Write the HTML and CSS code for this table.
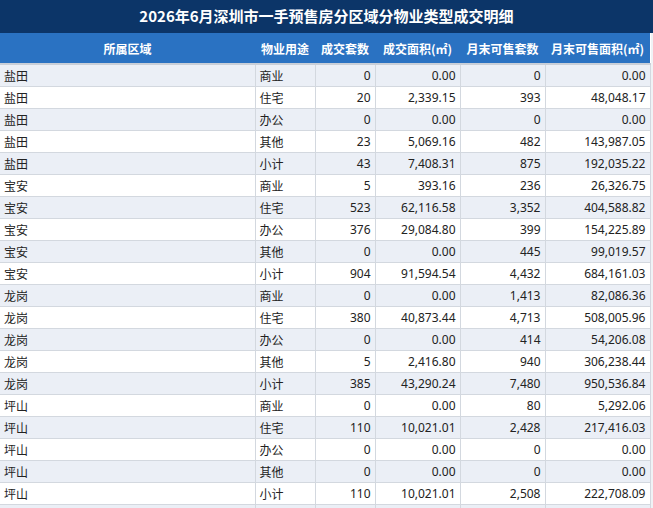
FILE: index.html
```html
<!DOCTYPE html>
<html lang="zh-CN">
<head>
<meta charset="utf-8">
<title>2026年6月深圳市一手预售房分区域分物业类型成交明细</title>
<link rel="stylesheet" href="styles.css">
</head>
<body>
<div class="title">2026年6月深圳市一手预售房分区域分物业类型成交明细</div>
<table class="grid">
<colgroup>
<col class="c-area"><col class="c-use"><col class="c-n"><col class="c-a"><col class="c-n2"><col class="c-a2">
</colgroup>
<thead>
<tr><th>所属区域</th><th>物业用途</th><th>成交套数</th><th>成交面积(㎡)</th><th>月末可售套数</th><th>月末可售面积(㎡)</th></tr>
</thead>
<tbody>
<tr><td>盐田</td><td>商业</td><td class="num">0</td><td class="num">0.00</td><td class="num">0</td><td class="num">0.00</td></tr>
<tr><td>盐田</td><td>住宅</td><td class="num">20</td><td class="num">2,339.15</td><td class="num">393</td><td class="num">48,048.17</td></tr>
<tr><td>盐田</td><td>办公</td><td class="num">0</td><td class="num">0.00</td><td class="num">0</td><td class="num">0.00</td></tr>
<tr><td>盐田</td><td>其他</td><td class="num">23</td><td class="num">5,069.16</td><td class="num">482</td><td class="num">143,987.05</td></tr>
<tr><td>盐田</td><td>小计</td><td class="num">43</td><td class="num">7,408.31</td><td class="num">875</td><td class="num">192,035.22</td></tr>
<tr><td>宝安</td><td>商业</td><td class="num">5</td><td class="num">393.16</td><td class="num">236</td><td class="num">26,326.75</td></tr>
<tr><td>宝安</td><td>住宅</td><td class="num">523</td><td class="num">62,116.58</td><td class="num">3,352</td><td class="num">404,588.82</td></tr>
<tr><td>宝安</td><td>办公</td><td class="num">376</td><td class="num">29,084.80</td><td class="num">399</td><td class="num">154,225.89</td></tr>
<tr><td>宝安</td><td>其他</td><td class="num">0</td><td class="num">0.00</td><td class="num">445</td><td class="num">99,019.57</td></tr>
<tr><td>宝安</td><td>小计</td><td class="num">904</td><td class="num">91,594.54</td><td class="num">4,432</td><td class="num">684,161.03</td></tr>
<tr><td>龙岗</td><td>商业</td><td class="num">0</td><td class="num">0.00</td><td class="num">1,413</td><td class="num">82,086.36</td></tr>
<tr><td>龙岗</td><td>住宅</td><td class="num">380</td><td class="num">40,873.44</td><td class="num">4,713</td><td class="num">508,005.96</td></tr>
<tr><td>龙岗</td><td>办公</td><td class="num">0</td><td class="num">0.00</td><td class="num">414</td><td class="num">54,206.08</td></tr>
<tr><td>龙岗</td><td>其他</td><td class="num">5</td><td class="num">2,416.80</td><td class="num">940</td><td class="num">306,238.44</td></tr>
<tr><td>龙岗</td><td>小计</td><td class="num">385</td><td class="num">43,290.24</td><td class="num">7,480</td><td class="num">950,536.84</td></tr>
<tr><td>坪山</td><td>商业</td><td class="num">0</td><td class="num">0.00</td><td class="num">80</td><td class="num">5,292.06</td></tr>
<tr><td>坪山</td><td>住宅</td><td class="num">110</td><td class="num">10,021.01</td><td class="num">2,428</td><td class="num">217,416.03</td></tr>
<tr><td>坪山</td><td>办公</td><td class="num">0</td><td class="num">0.00</td><td class="num">0</td><td class="num">0.00</td></tr>
<tr><td>坪山</td><td>其他</td><td class="num">0</td><td class="num">0.00</td><td class="num">0</td><td class="num">0.00</td></tr>
<tr><td>坪山</td><td>小计</td><td class="num">110</td><td class="num">10,021.01</td><td class="num">2,508</td><td class="num">222,708.09</td></tr>
<tr class="filler"><td></td><td></td><td></td><td></td><td></td><td></td></tr>
</tbody>
</table>
</body>
</html>
```

FILE: styles.css
```css
html, body {
  margin: 0;
  padding: 0;
}
body {
  background: #f0f2f5;
  font-family: "Noto Sans", "Noto Sans CJK SC", sans-serif;
  font-size: 12px;
  color: #222;
  overflow: hidden;
}
.title {
  height: 33px;
  line-height: 32px;
  background: #0c3568;
  color: #fff;
  font-weight: bold;
  font-size: 15px;
  text-align: center;
  font-family: "Noto Sans CJK SC", sans-serif;
}
.grid {
  width: 650px;
  border-collapse: collapse;
  table-layout: fixed;
  background: #fff;
}
.c-area { width: 255px; }
.c-use { width: 60px; }
.c-n { width: 60px; }
.c-a { width: 85px; }
.c-n2 { width: 85px; }
.c-a2 { width: 105px; }
.grid th {
  height: 30px;
  padding: 0;
  background: #2a72c2;
  color: #fff;
  font-weight: bold;
  font-size: 12px;
  font-family: "Noto Sans CJK SC", sans-serif;
  text-align: center;
  border-bottom: 2px solid #c9cfd8;
}
.grid td {
  height: 21px;
  padding: 0 4px;
  border: 1px solid #d3d8df;
  border-top: none;
  white-space: nowrap;
  font-family: "Noto Sans CJK SC", sans-serif;
  line-height: 20px;
}
.grid td:first-child { border-left: none; }
.grid td.num {
  text-align: right;
  font-family: "Noto Sans", sans-serif;
}
.grid tbody tr:nth-child(odd) td { background: #ebeff6; }
```
